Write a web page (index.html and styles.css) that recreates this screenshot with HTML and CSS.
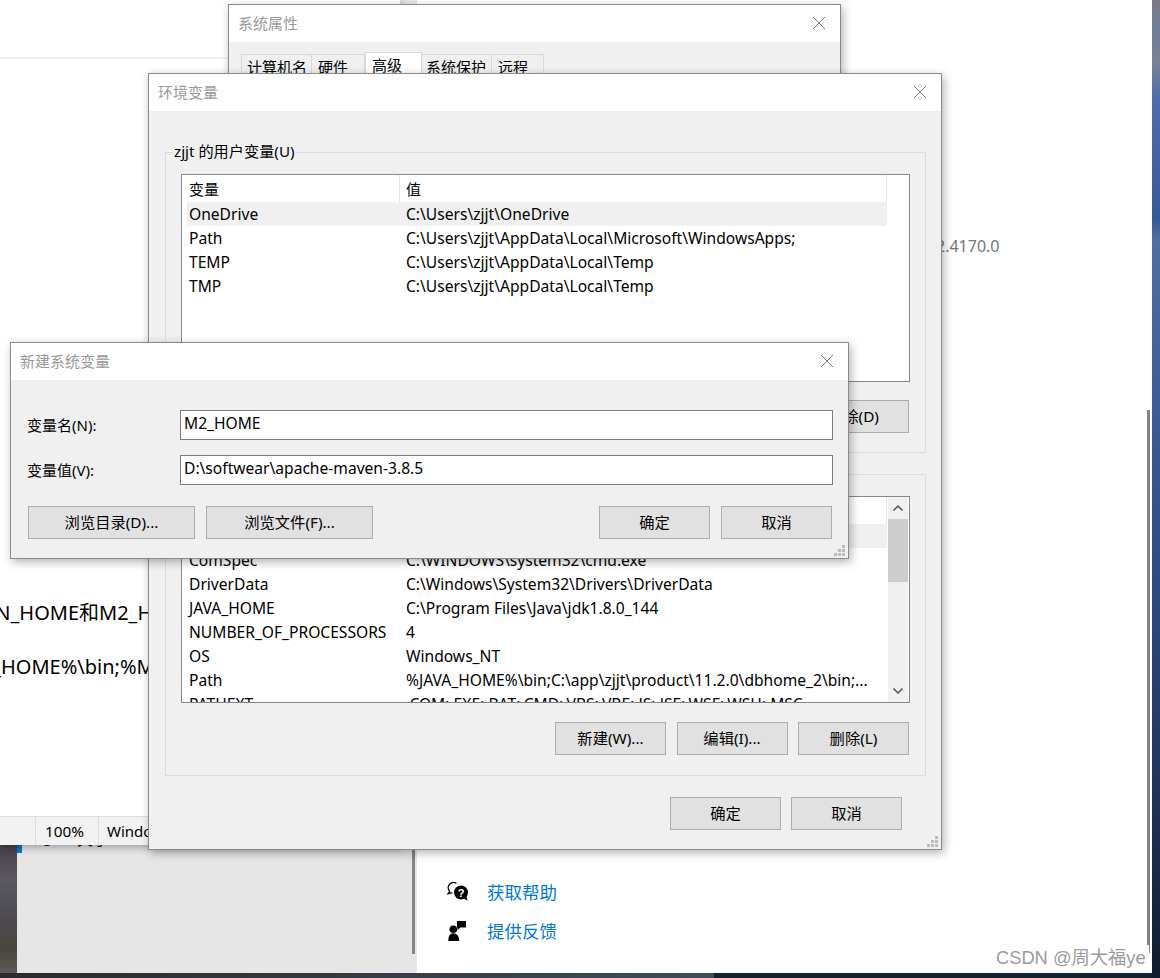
FILE: index.html
```html
<!DOCTYPE html>
<html lang="zh-CN">
<head>
<meta charset="utf-8">
<title>环境变量</title>
<link rel="stylesheet" href="styles.css">
</head>
<body>
<div class="desktop">
  <div class="wall wall-left"></div>
  <div class="wall wall-right"></div>
  <div class="taskbar"></div>

  <section class="settings">
    <aside class="side">
      <div class="nav-item">
        <svg class="nav-icon" width="16" height="16" viewBox="0 0 16 16"><circle cx="8" cy="8" r="6.5" fill="none" stroke="#000"/><path d="M8 7v4.500M8 4.500v1" stroke="#000"/></svg>
        <span>关于</span>
      </div>
      <div class="side-thumb"></div>
    </aside>
    <main class="main">
      <div class="version">2.4170.0</div>
      <div class="help">
        <a class="help-row">
          <svg width="22" height="20" viewBox="0 0 22 20"><path d="M9.500 1.300A5.300 5.300 0 0 0 2.600 9.200L.9 11.900l4.500-1.200" fill="none" stroke="#000" stroke-width="1.200"/><circle cx="14" cy="10.500" r="7"/><path d="M16 16l4.700 2.800-1.500-5z"/><text class="q" x="14" y="14.500" text-anchor="middle">?</text></svg>
          <span>获取帮助</span>
        </a>
        <a class="help-row">
          <svg width="22" height="20" viewBox="0 0 22 20"><circle cx="6.300" cy="8.300" r="3.800"/><path d="M1.300 20c0-5 1.500-7.800 5-7.800s6 2.800 6 7.800z"/><path d="M10 0h9v6.500h-5.500l-3 2.500v-2.500h-.5z"/></svg>
          <span>提供反馈</span>
        </a>
      </div>
    </main>
    <div class="main-thumb"></div>
  </section>

  <section class="doc">
    <div class="doc-rule"></div>
    <div class="doc-body">
      <p class="doc-line doc-line-a">MAVEN_HOME和M2_HOME</p>
      <p class="doc-line doc-line-b">%MAVEN_HOME%\bin;%M2_HOME%\bin</p>
    </div>
    <footer class="status">
      <span class="status-blank"></span>
      <span class="status-zoom">100%</span>
      <span class="status-eol">Windows (CRLF)</span>
    </footer>
  </section>

  <section class="window win-sys">
    <header class="titlebar"><span>系统属性</span>
      <svg class="close" width="14" height="14" viewBox="0 0 14 14"><path d="M1 1l12 12M13 1L1 13"/></svg>
    </header>
    <div class="sys-body">
      <div class="tabs">
        <div class="tab">计算机名</div>
        <div class="tab">硬件</div>
        <div class="tab tab-active">高级</div>
        <div class="tab">系统保护</div>
        <div class="tab">远程</div>
      </div>
    </div>
  </section>

  <section class="window win-env">
    <header class="titlebar"><span>环境变量</span>
      <svg class="close" width="14" height="14" viewBox="0 0 14 14"><path d="M1 1l12 12M13 1L1 13"/></svg>
    </header>
    <div class="env-body">
      <fieldset class="group group-user">
        <legend>zjjt 的用户变量(U)</legend>
        <div class="list">
          <div class="list-body">
            <div class="row row-head"><span class="cell-name">变量</span><span class="cell-val">值</span></div>
            <div class="row row-sel"><span class="cell-name">OneDrive</span><span class="cell-val">C:\Users\zjjt\OneDrive</span></div>
            <div class="row"><span class="cell-name">Path</span><span class="cell-val">C:\Users\zjjt\AppData\Local\Microsoft\WindowsApps;</span></div>
            <div class="row"><span class="cell-name">TEMP</span><span class="cell-val">C:\Users\zjjt\AppData\Local\Temp</span></div>
            <div class="row"><span class="cell-name">TMP</span><span class="cell-val">C:\Users\zjjt\AppData\Local\Temp</span></div>
          </div>
        </div>
        <div class="btn-row">
          <button class="btn">新建(N)...</button>
          <button class="btn">编辑(E)...</button>
          <button class="btn">删除(D)</button>
        </div>
      </fieldset>
      <fieldset class="group group-sys">
        <legend>系统变量(S)</legend>
        <div class="list">
          <div class="list-body">
            <div class="row row-head"><span class="cell-name">变量</span><span class="cell-val">值</span></div>
            <div class="row row-sel"></div>
            <div class="row"><span class="cell-name">ComSpec</span><span class="cell-val">C:\WINDOWS\system32\cmd.exe</span></div>
            <div class="row"><span class="cell-name">DriverData</span><span class="cell-val">C:\Windows\System32\Drivers\DriverData</span></div>
            <div class="row"><span class="cell-name">JAVA_HOME</span><span class="cell-val">C:\Program Files\Java\jdk1.8.0_144</span></div>
            <div class="row"><span class="cell-name">NUMBER_OF_PROCESSORS</span><span class="cell-val">4</span></div>
            <div class="row"><span class="cell-name">OS</span><span class="cell-val">Windows_NT</span></div>
            <div class="row"><span class="cell-name">Path</span><span class="cell-val">%JAVA_HOME%\bin;C:\app\zjjt\product\11.2.0\dbhome_2\bin;...</span></div>
            <div class="row"><span class="cell-name">PATHEXT</span><span class="cell-val">.COM;.EXE;.BAT;.CMD;.VBS;.VBE;.JS;.JSE;.WSF;.WSH;.MSC</span></div>
          </div>
          <div class="scrollbar">
            <svg class="arrow" width="20" height="22" viewBox="0 0 20 22"><path d="M5.500 13.500L10 9l4.500 4.500"/></svg>
            <div class="thumb"></div>
            <svg class="arrow arrow-down" width="20" height="22" viewBox="0 0 20 22"><path d="M5.500 8.500L10 13l4.500-4.500"/></svg>
          </div>
        </div>
        <div class="btn-row">
          <button class="btn">新建(W)...</button>
          <button class="btn">编辑(I)...</button>
          <button class="btn">删除(L)</button>
        </div>
      </fieldset>
      <div class="env-foot">
        <button class="btn">确定</button>
        <button class="btn">取消</button>
      </div>
    </div>
    <svg class="grip" width="11" height="11" viewBox="0 0 11 11"><path d="M8 0h3v3H8zM4 4h3v3H4zM8 4h3v3H8zM0 8h3v3H0zM4 8h3v3H4zM8 8h3v3H8z"/></svg>
  </section>

  <section class="window win-new">
    <header class="titlebar"><span>新建系统变量</span>
      <svg class="close" width="14" height="14" viewBox="0 0 14 14"><path d="M1 1l12 12M13 1L1 13"/></svg>
    </header>
    <div class="new-body">
      <div class="field">
        <label class="field-label">变量名(N):</label>
        <div class="input">M2_HOME</div>
      </div>
      <div class="field">
        <label class="field-label">变量值(V):</label>
        <div class="input">D:\softwear\apache-maven-3.8.5</div>
      </div>
      <div class="new-actions">
        <button class="btn btn-wide">浏览目录(D)...</button>
        <button class="btn btn-wide">浏览文件(F)...</button>
        <span class="spacer"></span>
        <button class="btn">确定</button>
        <button class="btn">取消</button>
      </div>
    </div>
    <svg class="grip" width="11" height="11" viewBox="0 0 11 11"><path d="M8 0h3v3H8zM4 4h3v3H4zM8 4h3v3H8zM0 8h3v3H0zM4 8h3v3H4zM8 8h3v3H8z"/></svg>
  </section>

  <div class="watermark">CSDN @周大福ye</div>
</div>
</body>
</html>
```

FILE: styles.css
```css
* { box-sizing: border-box; }
html, body { margin: 0; padding: 0; }
body {
  font-family: "Noto Sans", "Noto Sans CJK SC", sans-serif;
  font-size: 15px;
  color: #000;
}
.desktop {
  position: relative;
  width: 1160px;
  height: 978px;
  overflow: hidden;
  background: #1c2b45;
}
.wall { position: absolute; top: 0; }
.wall-left {
  left: 0;
  width: 17px;
  height: 973px;
  background: linear-gradient(180deg, #47444d 850px, #5b5860 880px, #4c4a50 920px, #4a463f 950px, #5c5a5a 973px);
}
.wall-right {
  left: 1152px;
  width: 8px;
  height: 978px;
  background: linear-gradient(180deg, #7b7b80 0, #707c9c 30px, #7c8296 60px, #4a6ea8 100px, #345a94 220px, #4f6f9f 240px, #3a5f94 400px, #2b4a7d 600px, #1f3358 800px, #101b30 978px);
}
.taskbar {
  position: absolute;
  left: 0;
  top: 973px;
  width: 1152px;
  height: 5px;
  background: linear-gradient(90deg, #2b2b2e 0, #414c57 714px, #16202d 714px);
}

/* settings window behind everything */
.settings {
  position: absolute;
  left: 17px;
  top: 0;
  width: 1135px;
  height: 973px;
  display: flex;
  background: #fff;
}
.side {
  position: relative;
  width: 400px;
  flex: none;
  padding-top: 813px;
  background: #e6e6e6;
}
.nav-item {
  display: flex;
  align-items: center;
  height: 40px;
  padding: 12px 0 0 17px;
  border-left: 5px solid #0078d7;
  font-size: 16px;
  line-height: 28px;
}
.nav-icon { flex: none; margin-right: 22px; }
.side-thumb {
  position: absolute;
  left: 395px;
  top: 600px;
  width: 3px;
  height: 354px;
  background: #858585;
}
.main {
  flex: 1;
  display: flex;
  flex-direction: column;
  padding-left: 30px;
}
.version {
  margin-top: 235px;
  margin-left: 489px;
  font-size: 16px;
  line-height: 22px;
  color: #767676;
}
.help { margin-top: auto; padding-bottom: 23px; }
.help-row {
  display: flex;
  align-items: center;
  height: 39px;
  font-size: 17.500px;
  color: #0078d7;
}
.help-row svg { flex: none; margin-right: 18px; }
.q { font: bold 11px "Liberation Sans", sans-serif; fill: #fff; }
.main-thumb {
  position: absolute;
  left: 1130px;
  top: 410px;
  width: 3px;
  height: 543px;
  background: #858585;
}

/* document window */
.doc {
  position: absolute;
  left: 0;
  top: 0;
  width: 400px;
  height: 845px;
  display: flex;
  flex-direction: column;
  background: #fff;
  box-shadow: 0 2px 8px rgba(0, 0, 0, .35);
}
.doc-rule {
  margin-top: 57px;
  height: 2px;
  background: #f0f0f0;
}
.doc-body { flex: 1; overflow: hidden; }
.doc-line {
  margin: 0;
  font-size: 20px;
  line-height: 28px;
  white-space: nowrap;
}
.doc-line-a { margin-top: 540px; margin-left: -58px; }
.doc-line-b { margin-top: 26px; margin-left: -93px; }
.status {
  display: flex;
  height: 29px;
  border-top: 1px solid #dcdcdc;
  background: #f2f2f2;
  line-height: 28px;
  white-space: nowrap;
  overflow: hidden;
}
.status-blank { width: 36px; border-right: 1px solid #dcdcdc; }
.status-zoom { width: 63px; padding-left: 9px; border-right: 1px solid #dcdcdc; font-size: 15.300px; }
.status-eol { padding-left: 8px; }

/* dialogs */
.window {
  position: absolute;
  display: flex;
  flex-direction: column;
  background: #f0f0f0;
  border: 1px solid #8a8a8a;
  box-shadow: 2px 3px 9px rgba(0, 0, 0, .3);
}
.titlebar {
  display: flex;
  align-items: center;
  justify-content: space-between;
  flex: none;
  height: 37px;
  padding: 0 14px 0 9px;
  background: #fff;
  color: #999;
  line-height: 35px;
}
.close { fill: none; stroke: #777; stroke-width: 1; margin-bottom: 2px; }
.win-sys { left: 228px; top: 4px; width: 613px; height: 300px; }
.sys-body { padding: 10px 0 0 12px; }
.tabs {
  display: grid;
  grid-template-columns: 71px 53px 57px 70px 52px;
  width: 303px;
  align-items: end;
}
.tab {
  height: 29px;
  margin-top: 2px;
  padding-left: 5px;
  border: 1px solid #d9d9d9;
  border-left-width: 0;
  line-height: 24px;
  background: #f0f0f0;
  white-space: nowrap;
}
.tab:first-child { border-left-width: 1px; }
.tab:nth-child(2) { padding-left: 6px; }
.tab:nth-child(4) { padding-left: 4px; }
.tab:last-child { padding-left: 6px; }
.tab-active {
  height: 31px;
  margin-top: 0;
  padding-left: 6px;
  background: #fff;
  border-left-width: 1px;
  border-color: #d9d9d9 #d9d9d9 #fff;
}
.win-env { left: 148px; top: 73px; width: 794px; height: 777px; }
.env-body { flex: 1; padding: 31px 15px 0 16px; }
.group {
  margin: 0;
  padding: 12px 15px 19px 15px;
  border: 1px solid #dcdcdc;
  min-width: 0;
}
.group legend {
  margin-left: -8px;
  padding: 0 1px 2px;
  font-size: 15.200px;
  line-height: 18px;
  white-space: nowrap;
}
.group-sys { margin-top: 11px; padding-bottom: 20px; }
.list {
  display: flex;
  height: 207px;
  border: 1px solid #828790;
  background: #fff;
  overflow: hidden;
}
.group-user .list { height: 208px; }
.group-user .btn-row { margin-top: 18px; }
.list-body {
  flex: none;
  width: 706px;
  padding: 0 1px 0 5px;
}
.row {
  display: grid;
  grid-template-columns: 213px 1fr;
  height: 24px;
  font-size: 15.600px;
  line-height: 24px;
  white-space: nowrap;
}
.row-head {
  height: 27px;
  font-size: 15px;
  line-height: 28px;
  border-right: 1px solid #e5e5e5;
}
.row-head .cell-name { border-right: 1px solid #e5e5e5; }
.row-sel { background: #f0f0f0; }
.cell-name { padding-left: 2px; overflow: hidden; }
.cell-val { padding-left: 6px; }
.scrollbar {
  flex: none;
  width: 20px;
  display: flex;
  flex-direction: column;
  background: #f0f0f0;
}
.arrow { flex: none; fill: none; stroke: #505050; stroke-width: 1.500; }
.arrow-down { margin-top: auto; }
.thumb { flex: none; height: 63px; background: #cdcdcd; }
.btn-row {
  display: flex;
  justify-content: flex-end;
  gap: 10.500px;
  margin-top: 19px;
  padding-right: 1px;
}
.btn {
  flex: none;
  width: 111px;
  height: 33px;
  padding: 0;
  font: inherit;
  font-size: 15.300px;
  line-height: 31px;
  color: #000;
  background: #e1e1e1;
  border: 1px solid #adadad;
  border-radius: 0;
  white-space: nowrap;
}
.btn-wide { width: 167px; }
.env-foot {
  display: flex;
  justify-content: flex-end;
  gap: 10px;
  margin-top: 21px;
  padding-right: 24px;
}
.grip { position: absolute; right: 3px; bottom: 2px; fill: #bdbdbd; }
.win-new { left: 10px; top: 342px; width: 839px; height: 217px; }
.new-body { flex: 1; padding: 30px 15px 0 16px; }
.field { display: flex; align-items: center; height: 30px; margin-bottom: 15px; }
.field-label { flex: none; width: 153px; padding-bottom: 1px; line-height: 24px; white-space: nowrap; }
.input {
  flex: 1;
  height: 30px;
  padding: 0 3px;
  background: #fff;
  border: 1px solid #7a7a7a;
  font-size: 15.600px;
  line-height: 25px;
  white-space: nowrap;
}
.new-actions {
  display: flex;
  gap: 11px;
  margin-top: 21px;
  padding: 0 1px;
}
.new-actions .spacer { flex: 1; }
.watermark {
  position: absolute;
  left: 996px;
  top: 945px;
  padding-right: 3px;
  font-family: "Liberation Sans", "Noto Sans CJK SC", sans-serif;
  font-size: 18.300px;
  line-height: 26px;
  color: #9b9b9b;
  white-space: nowrap;
  background: #fff;
}
```
